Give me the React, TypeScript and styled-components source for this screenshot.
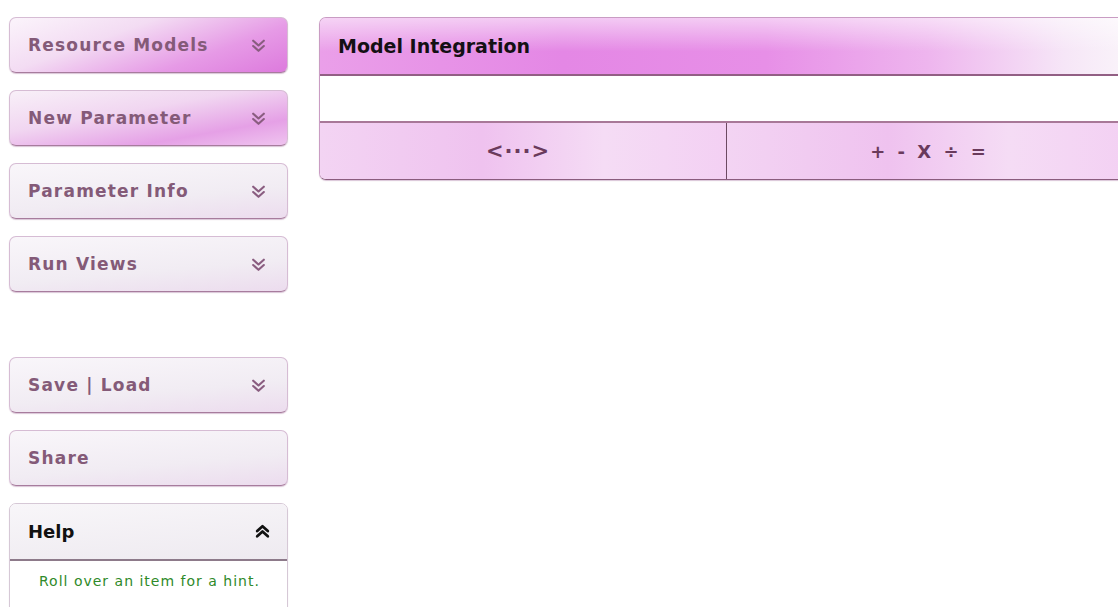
import React from 'react'
import styled, { createGlobalStyle } from 'styled-components'

const GlobalStyle = createGlobalStyle`
    html, body {
        margin: 0;
        padding: 0;
        background: #ffffff;
        overflow: hidden;
    }
    body {
        font-family: "DejaVu Sans", Verdana, sans-serif;
    }
`

type Tone = 'hot' | 'warm' | 'pale'

const tones: Record<Tone, string> = {
    hot: 'linear-gradient(160deg, #fbf4fb 0%, #f3dcf3 35%, #e69ae6 70%, #dd7add 100%)',
    warm: 'linear-gradient(170deg, #f8f0f8 0%, #f1d6f1 40%, #e5a0e6 75%, #efc4ef 100%)',
    pale: 'linear-gradient(175deg, #f9f6fa 0%, #f1ecf3 60%, #ecdcee 100%)',
}

const Page = styled.div`
    display: flex;
    align-items: flex-start;
    gap: 31px;
    padding: 17px 0 0 9px;
    height: 607px;
    box-sizing: border-box;
`

const Sidebar = styled.nav`
    display: flex;
    flex-direction: column;
    gap: 17px;
    width: 279px;
    flex-shrink: 0;
`

const Spacer = styled.div`
    height: 31px;
`

const MenuButton = styled.div<{ $tone: Tone }>`
    display: flex;
    align-items: center;
    justify-content: space-between;
    height: 56px;
    box-sizing: border-box;
    padding: 0 18px 0 18px;
    border: 1px solid #d6bcd4;
    border-bottom-color: #a77c9d;
    border-radius: 7px;
    background: ${(p) => tones[p.$tone]};
    box-shadow: 0 1px 1px rgba(150, 90, 140, 0.35);
    color: #845a78;
    font-size: 17px;
    font-weight: bold;
    letter-spacing: 1.2px;
`

const Chevrons = styled.svg<{ $dark?: boolean }>`
    width: 17px;
    height: 17px;
    margin-right: 2px;
    color: ${(p) => (p.$dark ? '#111' : '#8a5d80')};
`

const HelpBox = styled.section`
    border: 1px solid #d6c8d6;
    border-radius: 7px 7px 0 0;
    overflow: hidden;
    box-shadow: 0 1px 1px rgba(150, 90, 140, 0.25);
`

const HelpHeader = styled.div`
    display: flex;
    align-items: center;
    justify-content: space-between;
    height: 55px;
    padding: 0 14px 0 18px;
    background: linear-gradient(175deg, #f8f6f9 0%, #eeeaf0 100%);
    border-bottom: 2px solid #8d7a8a;
    font-weight: bold;
    font-size: 18px;
    color: #111;
`

const HelpBody = styled.div`
    padding: 12px 0 20px 29px;
    background: #fff;
    color: #2f8a2a;
    font-size: 14px;
    letter-spacing: 1px;
`

const Panel = styled.section`
    width: 810px;
    flex-shrink: 0;
    border: 1px solid #c99cc3;
    border-bottom-color: #8a5c7e;
    border-radius: 7px;
    overflow: hidden;
    box-shadow: 0 1px 1px rgba(150, 90, 140, 0.35);
`

const PanelTitle = styled.div`
    height: 56px;
    display: flex;
    align-items: center;
    padding-left: 18px;
    background:
        linear-gradient(180deg, rgba(255, 255, 255, 0.55) 0%, rgba(255, 255, 255, 0) 60%),
        linear-gradient(90deg, #ea9fe9 0%, #e487e5 30%, #e78fe7 55%, #eeb5ee 75%, #f6e6f7 92%, #faf4fa 100%);
    border-bottom: 2px solid #925f84;
    font-weight: bold;
    font-size: 19px;
    color: #141014;
`

const PanelBlank = styled.div`
    height: 45px;
    background: #fff;
    border-bottom: 2px solid #a87898;
`

const ToolRow = styled.div`
    display: grid;
    grid-template-columns: 406px 1fr;
    height: 56px;
`

const Tool = styled.div<{ $first?: boolean }>`
    display: flex;
    align-items: center;
    justify-content: center;
    background: linear-gradient(90deg, #f3d4f3 0%, #efc2ef 40%, #f5dcf5 70%, #f3d0f3 100%);
    border-left: ${(p) => (p.$first ? 'none' : '1px solid #6c4a62')};
    color: #6a3a5c;
    font-size: 18px;
    font-weight: bold;
    letter-spacing: 1px;
`

const Arrows = styled.span`
    font-size: 21px;
    margin-right: 10px;
`

const ToolOps = styled.span`
    word-spacing: 4px;
`

const DoubleChevron: React.FC<{ up?: boolean; dark?: boolean }> = ({ up, dark }) => (
    <Chevrons $dark={dark} viewBox="0 0 16 16" fill="none">
        <g
            stroke="currentColor"
            strokeWidth={dark ? 2.6 : 2}
            strokeLinecap="round"
            strokeLinejoin="round"
            transform={up ? 'rotate(180 8 8)' : undefined}
        >
            <path d="M3 3.5 L8 8 L13 3.5" />
            <path d="M3 8.5 L8 13 L13 8.5" />
        </g>
    </Chevrons>
)

const App: React.FC = () => {
    return (
        <>
            <GlobalStyle />
            <Page>
                <Sidebar>
                    <MenuButton $tone="hot">
                        Resource Models
                        <DoubleChevron />
                    </MenuButton>
                    <MenuButton $tone="warm">
                        New Parameter
                        <DoubleChevron />
                    </MenuButton>
                    <MenuButton $tone="pale">
                        Parameter Info
                        <DoubleChevron />
                    </MenuButton>
                    <MenuButton $tone="pale">
                        Run Views
                        <DoubleChevron />
                    </MenuButton>
                    <Spacer />
                    <MenuButton $tone="pale">
                        Save | Load
                        <DoubleChevron />
                    </MenuButton>
                    <MenuButton $tone="pale">Share</MenuButton>
                    <HelpBox>
                        <HelpHeader>
                            Help
                            <DoubleChevron up dark />
                        </HelpHeader>
                        <HelpBody>Roll over an item for a hint.</HelpBody>
                    </HelpBox>
                </Sidebar>
                <Panel>
                    <PanelTitle>Model Integration</PanelTitle>
                    <PanelBlank />
                    <ToolRow>
                        <Tool $first>
                            <Arrows>&lt;···&gt;</Arrows>
                        </Tool>
                        <Tool>
                            <ToolOps>+ - X ÷ =</ToolOps>
                        </Tool>
                    </ToolRow>
                </Panel>
            </Page>
        </>
    )
}

export default App
